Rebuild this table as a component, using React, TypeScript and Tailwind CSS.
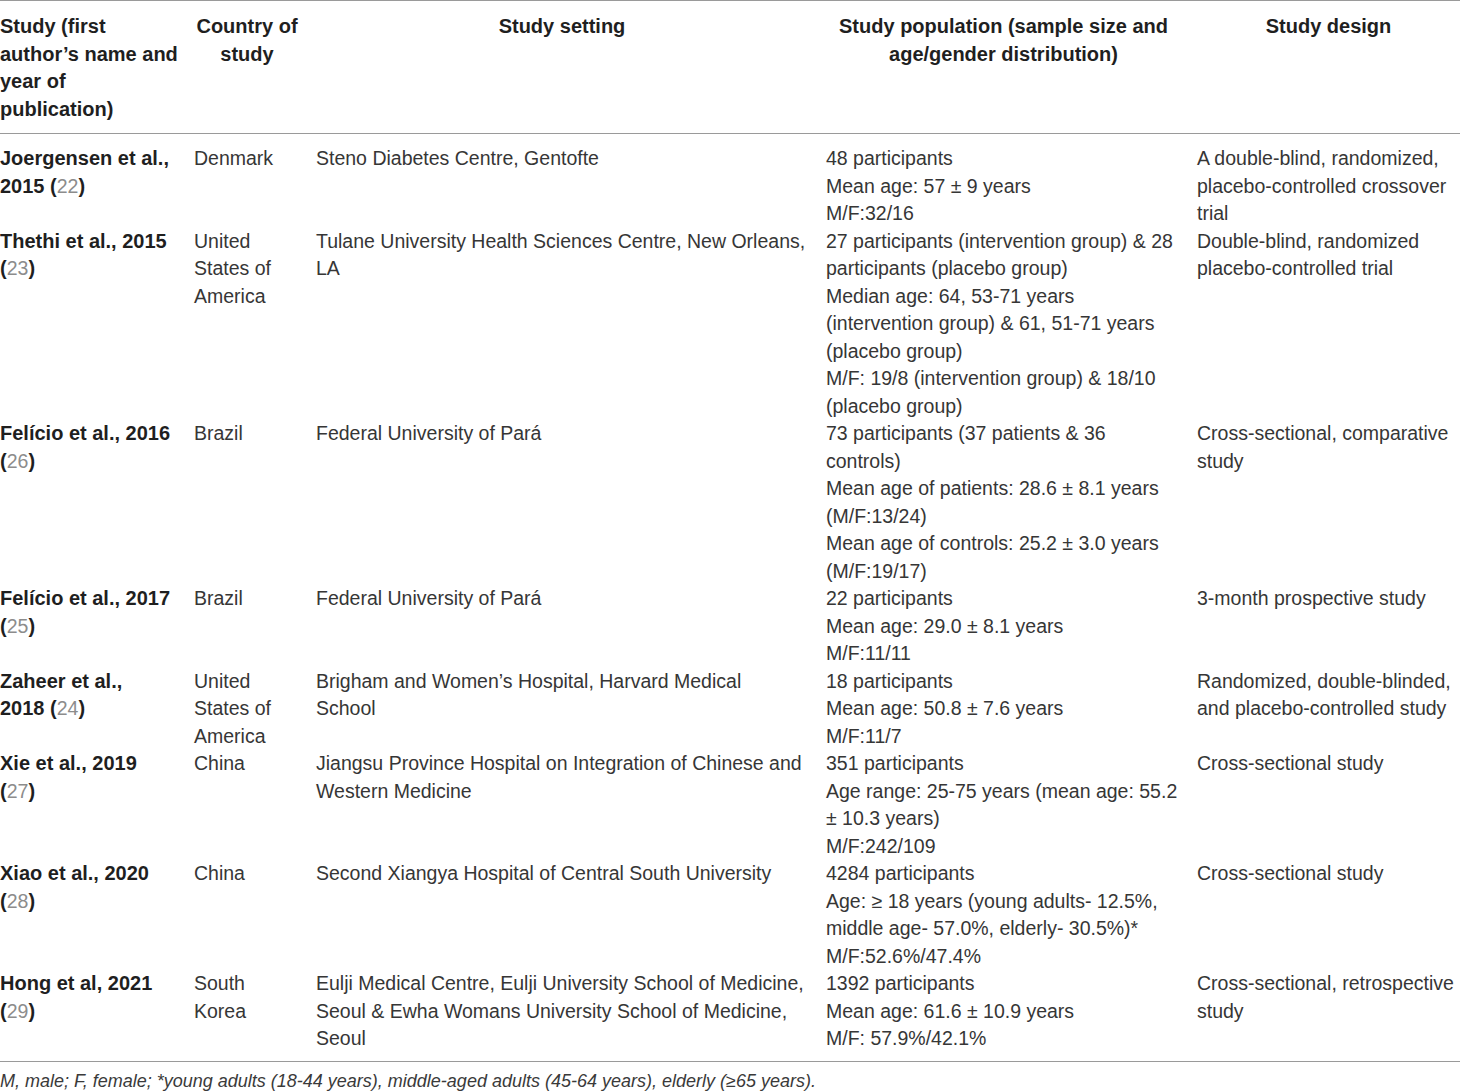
import React from "react";

interface Study {
  author: string[];
  refNo: string;
  // true when "(ref)" sits on the same line as the last author line
  refInline: boolean;
  country: string[];
  setting: string[];
  population: string[];
  design: string[];
}

const studies: Study[] = [
  {
    author: ["Joergensen et al.,", "2015"],
    refNo: "22",
    refInline: true,
    country: ["Denmark"],
    setting: ["Steno Diabetes Centre, Gentofte"],
    population: ["48 participants", "Mean age: 57 ± 9 years", "M/F:32/16"],
    design: ["A double-blind, randomized,", "placebo-controlled crossover", "trial"],
  },
  {
    author: ["Thethi et al., 2015"],
    refNo: "23",
    refInline: false,
    country: ["United", "States of", "America"],
    setting: ["Tulane University Health Sciences Centre, New Orleans,", "LA"],
    population: [
      "27 participants (intervention group) & 28",
      "participants (placebo group)",
      "Median age: 64, 53-71 years",
      "(intervention group) & 61, 51-71 years",
      "(placebo group)",
      "M/F: 19/8 (intervention group) & 18/10",
      "(placebo group)",
    ],
    design: ["Double-blind, randomized", "placebo-controlled trial"],
  },
  {
    author: ["Felício et al., 2016"],
    refNo: "26",
    refInline: false,
    country: ["Brazil"],
    setting: ["Federal University of Pará"],
    population: [
      "73 participants (37 patients & 36",
      "controls)",
      "Mean age of patients: 28.6 ± 8.1 years",
      "(M/F:13/24)",
      "Mean age of controls: 25.2 ± 3.0 years",
      "(M/F:19/17)",
    ],
    design: ["Cross-sectional, comparative", "study"],
  },
  {
    author: ["Felício et al., 2017"],
    refNo: "25",
    refInline: false,
    country: ["Brazil"],
    setting: ["Federal University of Pará"],
    population: ["22 participants", "Mean age: 29.0 ± 8.1 years", "M/F:11/11"],
    design: ["3-month prospective study"],
  },
  {
    author: ["Zaheer et al.,", "2018"],
    refNo: "24",
    refInline: true,
    country: ["United", "States of", "America"],
    setting: ["Brigham and Women’s Hospital, Harvard Medical", "School"],
    population: ["18 participants", "Mean age: 50.8 ± 7.6 years", "M/F:11/7"],
    design: ["Randomized, double-blinded,", "and placebo-controlled study"],
  },
  {
    author: ["Xie et al., 2019"],
    refNo: "27",
    refInline: false,
    country: ["China"],
    setting: ["Jiangsu Province Hospital on Integration of Chinese and", "Western Medicine"],
    population: [
      "351 participants",
      "Age range: 25-75 years (mean age: 55.2",
      "± 10.3 years)",
      "M/F:242/109",
    ],
    design: ["Cross-sectional study"],
  },
  {
    author: ["Xiao et al., 2020"],
    refNo: "28",
    refInline: false,
    country: ["China"],
    setting: ["Second Xiangya Hospital of Central South University"],
    population: [
      "4284 participants",
      "Age: ≥ 18 years (young adults- 12.5%,",
      "middle age- 57.0%, elderly- 30.5%)*",
      "M/F:52.6%/47.4%",
    ],
    design: ["Cross-sectional study"],
  },
  {
    author: ["Hong et al, 2021"],
    refNo: "29",
    refInline: false,
    country: ["South", "Korea"],
    setting: [
      "Eulji Medical Centre, Eulji University School of Medicine,",
      "Seoul & Ewha Womans University School of Medicine,",
      "Seoul",
    ],
    population: ["1392 participants", "Mean age: 61.6 ± 10.9 years", "M/F: 57.9%/42.1%"],
    design: ["Cross-sectional, retrospective", "study"],
  },
];

function Lines({ lines }: { lines: string[] }) {
  return (
    <>
      {lines.map((line, i) => (
        <div key={i} className="whitespace-nowrap">
          {line}
        </div>
      ))}
    </>
  );
}

function Ref({ n }: { n: string }) {
  return (
    <span>
      (<span className="font-normal text-[19.5px] text-[#8c8c8c]">{n}</span>)
    </span>
  );
}

export default function App() {
  return (
    <div
      className="w-[1460px] min-h-[1092px] bg-white text-[19.5px] leading-[27.5px] text-[#363636]"
      style={{ fontFamily: '"Liberation Sans", Arial, sans-serif' }}
    >
      <div className="border-t border-b border-[#9a9a9a]">
        {/* Header */}
        <div className="grid grid-cols-[194px_122px_510px_371px_263px] border-b border-[#9a9a9a] pt-[12px] pb-[10px] text-[20px] font-bold text-[#1f1f1f]">
          <div className="pr-[8px]">
            <Lines lines={["Study (first", "author’s name and", "year of", "publication)"]} />
          </div>
          <div className="pr-[16px] text-center">
            <Lines lines={["Country of", "study"]} />
          </div>
          <div className="pr-[18px] text-center">Study setting</div>
          <div className="pr-[16px] text-center">
            <Lines lines={["Study population (sample size and", "age/gender distribution)"]} />
          </div>
          <div className="text-center">Study design</div>
        </div>

        {/* Body */}
        <div className="pt-[11px] pb-[8px]">
          {studies.map((s, idx) => {
            const head = s.author.slice(0, -1);
            const last = s.author[s.author.length - 1];
            return (
              <div key={idx} className="grid grid-cols-[194px_122px_510px_371px_263px]">
                <div className="pr-[8px] text-[20px] font-bold text-[#1f1f1f]">
                  <Lines lines={head} />
                  <div className="whitespace-nowrap">
                    {last}
                    {s.refInline && (
                      <>
                        {" "}
                        <Ref n={s.refNo} />
                      </>
                    )}
                  </div>
                  {!s.refInline && (
                    <div>
                      <Ref n={s.refNo} />
                    </div>
                  )}
                </div>
                <div className="pr-[16px]">
                  <Lines lines={s.country} />
                </div>
                <div className="pr-[18px]">
                  <Lines lines={s.setting} />
                </div>
                <div className="pr-[16px]">
                  <Lines lines={s.population} />
                </div>
                <div>
                  <Lines lines={s.design} />
                </div>
              </div>
            );
          })}
        </div>
      </div>

      {/* Footnote */}
      <p className="pt-[6px] italic text-[18px] leading-[26px] text-[#3a3a3a]">
        M, male; F, female; *young adults (18-44 years), middle-aged adults (45-64 years), elderly (≥65 years).
      </p>
    </div>
  );
}
